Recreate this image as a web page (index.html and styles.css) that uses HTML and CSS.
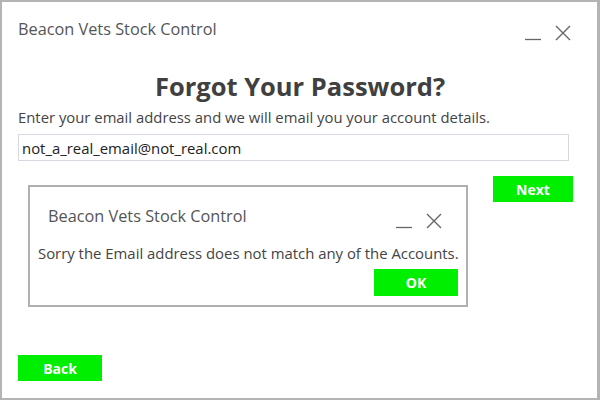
FILE: index.html
```html
<!DOCTYPE html>
<html>
<head>
<meta charset="utf-8">
<link rel="stylesheet" href="styles.css">
</head>
<body>
<div class="window">
  <div class="titlebar">
    <span class="title">Beacon Vets Stock Control</span>
    <div class="controls">
      <svg class="ctl" width="16" height="16" viewBox="0 0 16 16"><path d="M0 14.5H16" stroke="#666" stroke-width="1.3"/></svg>
      <svg class="ctl" width="16" height="16" viewBox="0 0 16 16"><path d="M1 1L15 15M15 1L1 15" stroke="#666" stroke-width="1.4"/></svg>
    </div>
  </div>
  <h1 class="heading">Forgot Your Password?</h1>
  <p class="intro">Enter your email address and we will email you your account details.</p>
  <input class="email" type="text" value="not_a_real_email@not_real.com">
  <div class="actions">
    <button class="btn btn-next">Next</button>
  </div>
  <div class="footer">
    <button class="btn btn-back">Back</button>
  </div>

  <div class="dialog">
    <div class="titlebar dlg-titlebar">
      <span class="title">Beacon Vets Stock Control</span>
      <div class="controls">
        <svg class="ctl" width="16" height="16" viewBox="0 0 16 16"><path d="M0 14.5H16" stroke="#666" stroke-width="1.3"/></svg>
        <svg class="ctl" width="16" height="16" viewBox="0 0 16 16"><path d="M1 1L15 15M15 1L1 15" stroke="#666" stroke-width="1.4"/></svg>
      </div>
    </div>
    <p class="message">Sorry the Email address does not match any of the Accounts.</p>
    <div class="dlg-actions">
      <button class="btn btn-ok">OK</button>
    </div>
  </div>
</div>
</body>
</html>
```
FILE: styles.css
```css
html, body {
  margin: 0;
  padding: 0;
  background: #fff;
}
body {
  font-family: "Open Sans", "Noto Sans", sans-serif;
  color: #444;
}
.window {
  position: relative;
  box-sizing: border-box;
  width: 600px;
  height: 400px;
  border: 2px solid #b4b4b4;
  border-right-width: 3px;
  background: #fff;
  display: flex;
  flex-direction: column;
  padding: 16px 26px 17px 16px;
}
.titlebar {
  display: flex;
  justify-content: space-between;
  align-items: flex-start;
  height: 30px;
}
.title {
  font-size: 16.3px;
  color: #555;
  line-height: 22px;
}
.controls {
  display: flex;
  gap: 14px;
  padding-top: 7px;
}
.ctl {
  display: block;
}
.heading {
  margin: 22px 0 0 0;
  padding-left: 11px;
  text-align: center;
  font-size: 25.5px;
  font-weight: 700;
  color: #404040;
  line-height: 32px;
}
.intro {
  margin: 5px 0 0 0;
  font-size: 14.85px;
  line-height: 20px;
  color: #444;
}
.email {
  margin-top: 7px;
  box-sizing: border-box;
  width: 551px;
  height: 27px;
  border: 1px solid #d8d8e0;
  padding: 0 3px;
  font-family: inherit;
  font-size: 14.9px;
  color: #222;
  outline: none;
}
.actions {
  display: flex;
  justify-content: flex-end;
  margin-top: 15px;
  margin-right: -2px;
}
.btn {
  border: none;
  background: #00ee00;
  color: #fff;
  font-family: inherit;
  font-weight: 700;
  font-size: 14px;
  padding: 0;
  height: 26px;
  cursor: pointer;
}
.btn-next { width: 80px; }
.footer {
  margin-top: auto;
}
.btn-back { width: 84px; }
.dialog {
  position: absolute;
  left: 26px;
  top: 183px;
  width: 440px;
  height: 122px;
  box-sizing: border-box;
  border: 2px solid #b0b0b0;
  background: #fff;
  padding: 18px 8px 0 8px;
  display: flex;
  flex-direction: column;
}
.dlg-titlebar {
  padding-left: 10px;
  padding-right: 16px;
  height: 30px;
}
.dlg-titlebar .controls {
  padding-top: 8px;
}
.message {
  margin: 8px 0 0 0;
  font-size: 14.9px;
  line-height: 20px;
  color: #444;
  white-space: nowrap;
}
.dlg-actions {
  display: flex;
  justify-content: flex-end;
  margin-top: 6px;
}
.btn-ok { width: 84px; height: 27px; }
```
